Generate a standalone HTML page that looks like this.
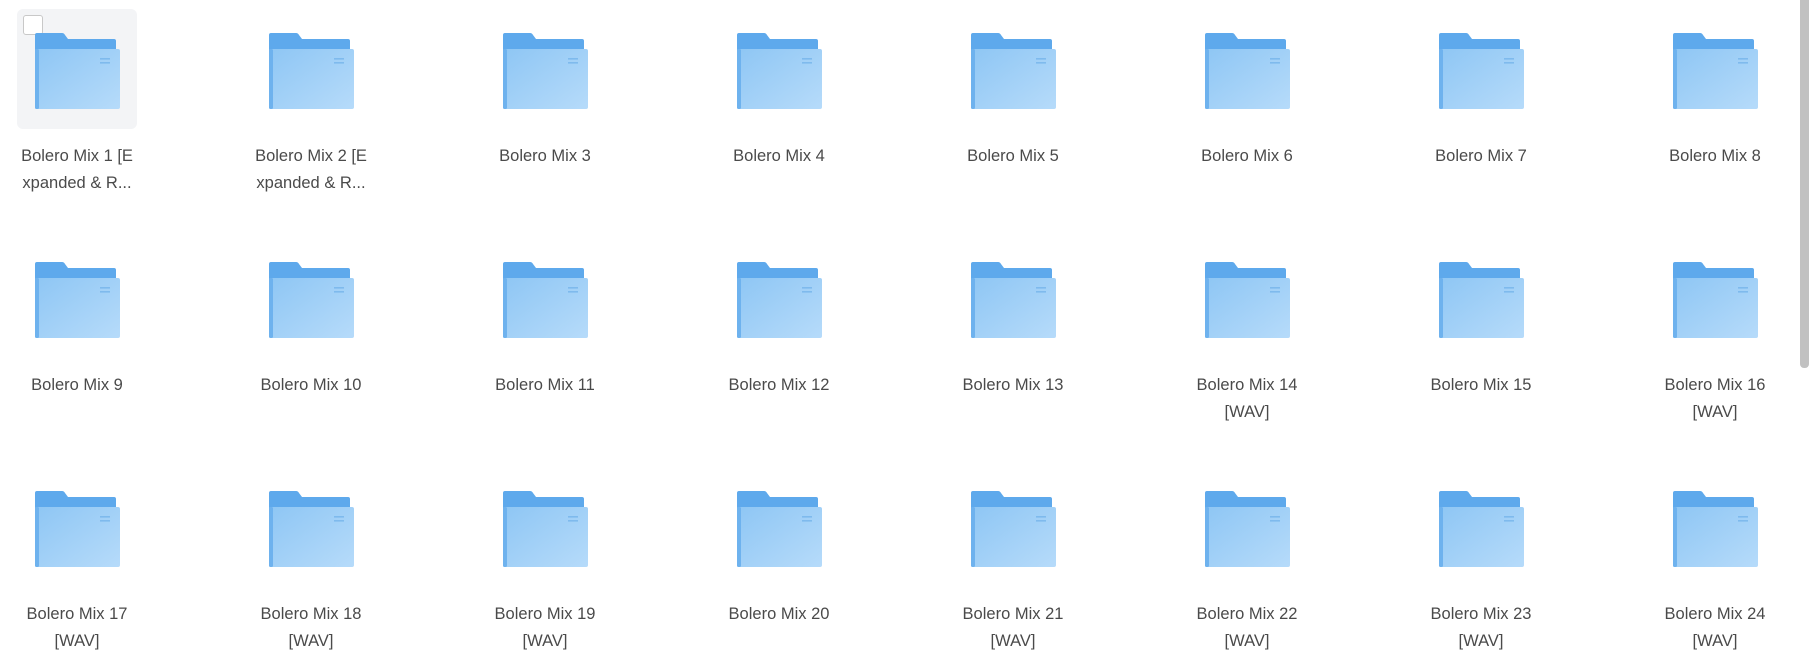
<!DOCTYPE html>
<html><head><meta charset="utf-8"><style>
html,body{margin:0;padding:0;background:#fff;width:1809px;height:660px;overflow:hidden;font-family:"Liberation Sans",sans-serif}
.it{position:absolute;width:200px;text-align:center}
.it svg{position:absolute;left:58px;width:85px;height:76px}
.t{position:absolute;left:0;width:200px;font-size:16.5px;line-height:27px;color:#4a4a4a}
.card{position:absolute;left:17px;top:9px;width:120px;height:120px;background:#f3f4f6;border-radius:6px}
.cb{position:absolute;left:23px;top:15px;width:18px;height:18px;background:#fff;border:1px solid #c8c8c8;border-radius:3px}
.sb{position:absolute;left:1800px;top:0;width:9px;height:368px;background:#c1c1c1;border-radius:0 0 4px 4px}
</style></head><body>
<svg width="0" height="0" style="position:absolute"><defs>
<linearGradient id="g" x1="0" y1="0" x2="1" y2="1"><stop offset="0" stop-color="#8ec6f4"/><stop offset="1" stop-color="#b6dbfa"/></linearGradient>
<symbol id="f" viewBox="0 0 85 76">
<path d="M2 0H27Q29 0 30 2L33 6H79Q81 6 81 8V70H0V2Q0 0 2 0Z" fill="#5ea9ec"/>
<rect x="0" y="16" width="85" height="60" rx="2" fill="url(#g)"/>
<rect x="0" y="16" width="4" height="60" rx="1.5" fill="#6eb2ee"/>
<rect x="65" y="25" width="10" height="1.6" fill="#6fb0e8" opacity=".7"/>
<rect x="65" y="29" width="10" height="1.6" fill="#6fb0e8" opacity=".7"/>
</symbol></defs></svg>
<div class="card"></div><div class="cb"></div>
<div id="c"></div>
<div class="sb"></div>
<script>
var names=["Bolero Mix 1 [E|xpanded & R...","Bolero Mix 2 [E|xpanded & R..."];
for(var i=3;i<=13;i++)names.push("Bolero Mix "+i);
for(var i=14;i<=24;i++)names.push(i==15||i==20?"Bolero Mix "+i:"Bolero Mix "+i+"|[WAV]");
var h="";
for(var k=0;k<24;k++){var c=k%8,r=Math.floor(k/8);
var x=77+c*234-100,y=r*229;
h+='<div class="it" style="left:'+x+'px;top:'+y+'px"><svg style="top:33px"><use href="#f"/></svg><div class="t" style="top:143px">'+names[k].replace("|","<br>")+'</div></div>';}
document.getElementById("c").innerHTML=h;
</script>
</body></html>
